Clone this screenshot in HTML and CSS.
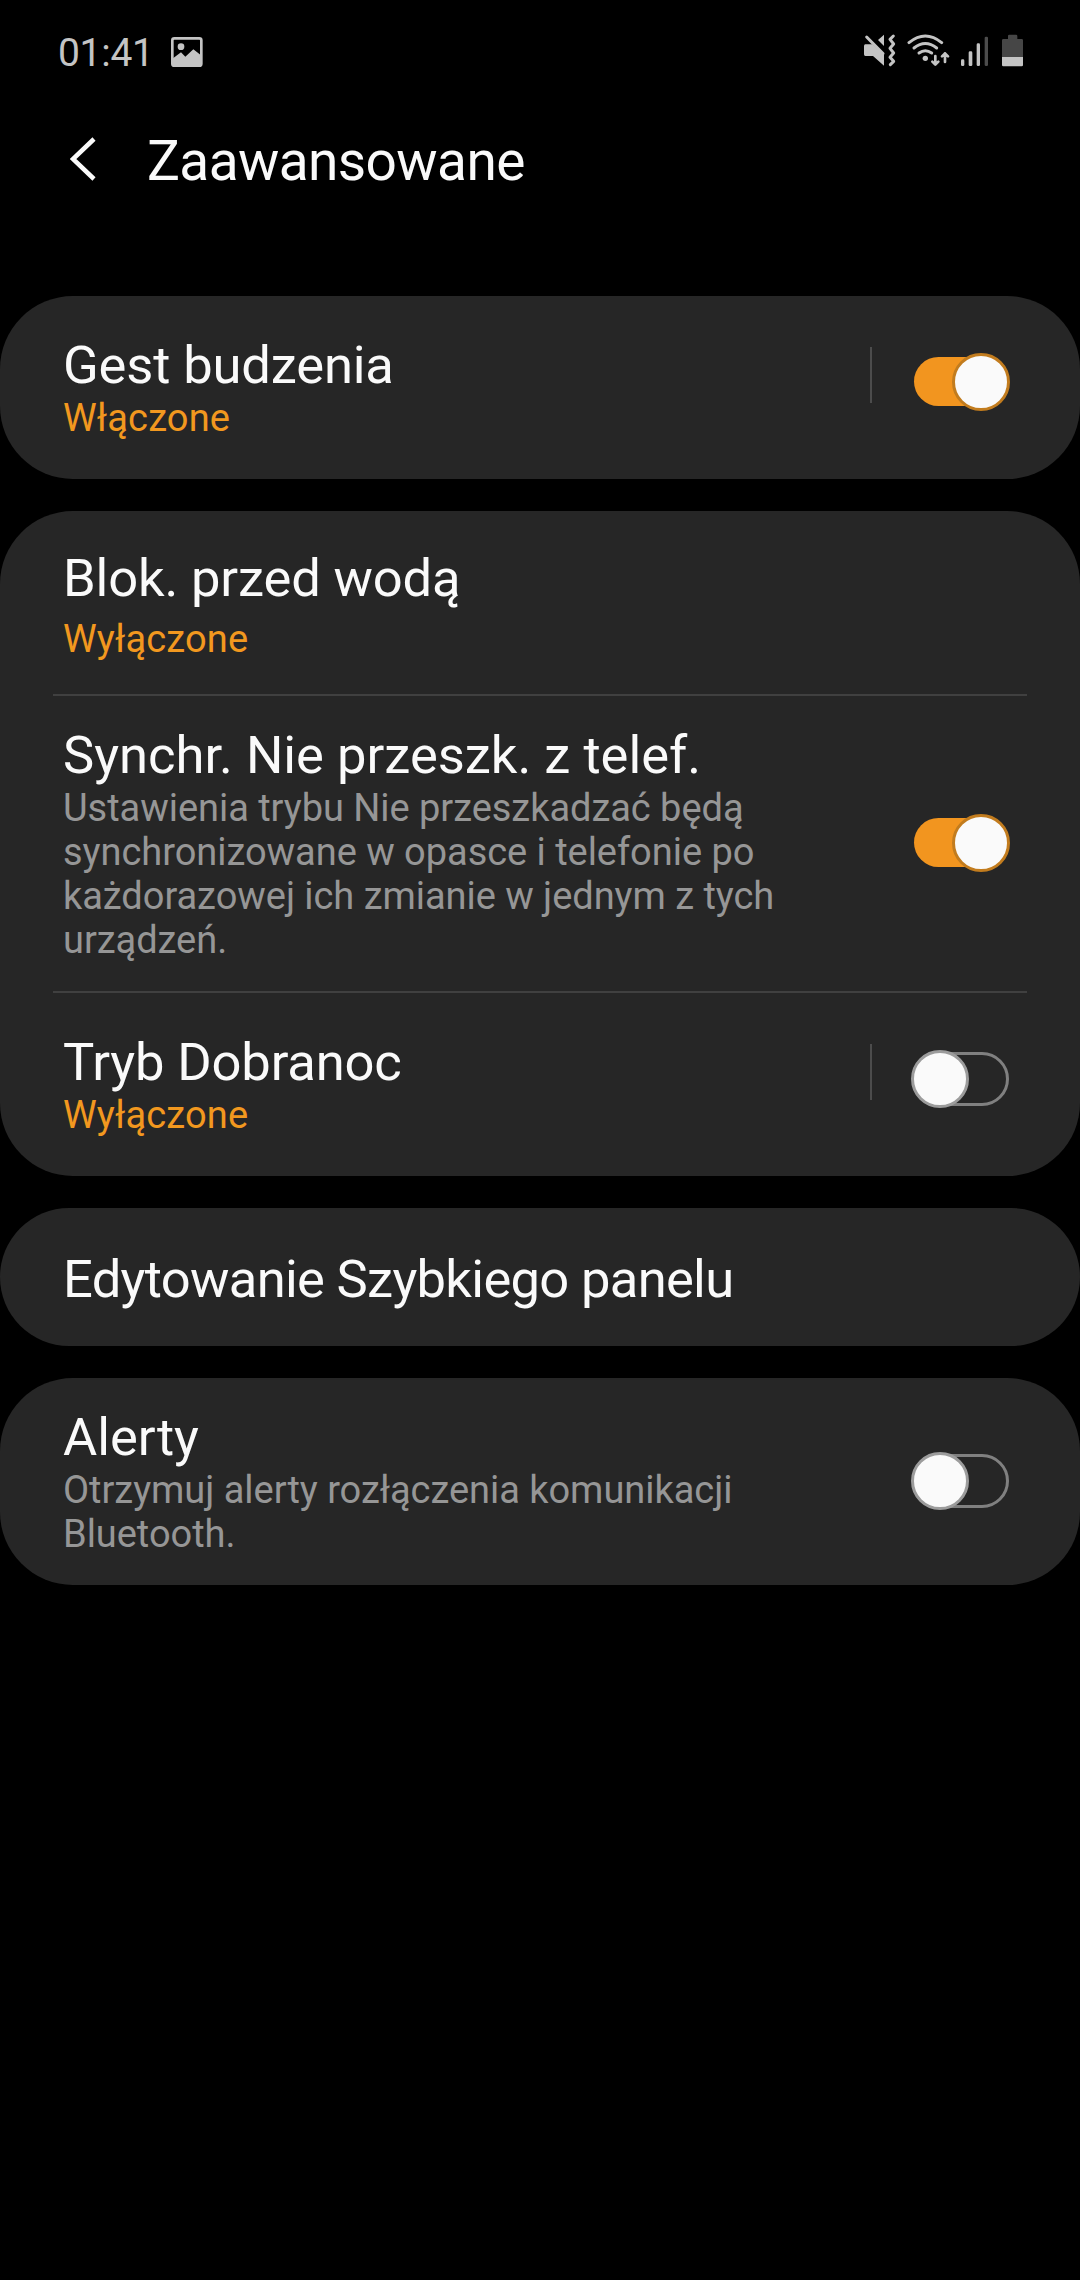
FILE: index.html
```html
<!DOCTYPE html>
<html lang="pl">
<head>
    <meta charset="utf-8">
    <meta name="viewport" content="width=device-width, initial-scale=1">
    <title>Zaawansowane</title>
    <link rel="stylesheet" href="styles.css">
</head>
<body>

<div class="status-bar">
    <span class="clock">01:41</span>
    <svg class="icon-picture" width="32" height="30" viewBox="0 0 96 90">
        <rect x="4" y="4" width="87" height="82" rx="6" fill="none" stroke="#c4c4c4" stroke-width="8"/>
        <circle cx="30" cy="29" r="10" fill="#c4c4c4"/>
        <path d="M6 64 L30 46 L43 59 L67 37 L90 55 V85 H6 Z" fill="#c4c4c4"/>
    </svg>
    <div class="status-icons">
        <svg class="icon-mute" width="32" height="34" viewBox="42 39 96 102">
            <path d="M46 73 H66 L102 104 V137 L69 108 H46 Q42 108 42 103 V78 Q42 73 46 73 Z" fill="#c4c4c4"/>
            <path d="M102 44 V78 L84 60 Z" fill="#c4c4c4"/>
            <path d="M50 51 L99 101" stroke="#c4c4c4" stroke-width="9" stroke-linecap="round"/>
            <path d="M130 48 L120 58 L131 72 L120 85 L131 99 L120 112 L131 124 L121 134" fill="none" stroke="#c4c4c4" stroke-width="9" stroke-linecap="round" stroke-linejoin="round"/>
        </svg>
        <svg class="icon-wifi" width="45" height="34" viewBox="168 39 135 102">
            <g fill="none" stroke="#c4c4c4" stroke-width="9" stroke-linecap="round">
                <path d="M177 68 Q226 28 275 68"/>
                <path d="M192 84 Q226 57 260 84"/>
                <path d="M207 99 Q226 85 245 99"/>
            </g>
            <circle cx="226" cy="115" r="8" fill="#c4c4c4"/>
            <g fill="none" stroke="#c4c4c4" stroke-width="8" stroke-linecap="round" stroke-linejoin="round">
                <path d="M256 108 V133 M247 125 L256 134 L265 125"/>
                <path d="M285 126 V100 M276 109 L285 100 L294 109"/>
            </g>
        </svg>
        <svg class="icon-signal" width="30" height="34" viewBox="327 39 90 102">
            <rect x="333" y="118" width="10" height="20" rx="4" fill="#c4c4c4"/>
            <rect x="356" y="94" width="11" height="44" rx="4" fill="#c4c4c4"/>
            <rect x="380" y="70" width="10" height="68" rx="4" fill="#c4c4c4"/>
            <rect x="404" y="50" width="10" height="88" rx="4" fill="#4c4c4c"/>
        </svg>
        <svg class="icon-battery" width="23" height="34" viewBox="453 39 69 102">
            <path d="M474 57 V48 Q474 44 478 44 H498 Q502 44 502 48 V57 H515 Q519 57 519 61 V111 H456 V61 Q456 57 460 57 Z" fill="#464646"/>
            <path d="M456 111 H519 V135 Q519 139 515 139 H460 Q456 139 456 135 Z" fill="#c4c4c4"/>
        </svg>
    </div>
</div>

<div class="header">
    <svg class="back" width="26" height="44" viewBox="0 0 26 44">
        <path d="M24 2 L3 22 L24 42" fill="none" stroke="#fafafa" stroke-width="4.5"/>
    </svg>
    <h1>Zaawansowane</h1>
</div>

<div class="settings">
    <div class="card">
        <div class="row tall">
            <div class="text">
                <div class="title">Gest budzenia</div>
                <div class="state">Włączone</div>
            </div>
            <div class="separator"></div>
            <div class="switch on"><div class="track"></div><div class="thumb"></div></div>
        </div>
    </div>

    <div class="card">
        <div class="row spaced">
            <div class="text">
                <div class="title">Blok. przed wodą</div>
                <div class="state">Wyłączone</div>
            </div>
        </div>
        <div class="divider"></div>
        <div class="row">
            <div class="text">
                <div class="title wide">Synchr. Nie przeszk. z telef.</div>
                <div class="desc">Ustawienia trybu Nie przeszkadzać będą synchronizowane w opasce i telefonie po każdorazowej ich zmianie w jednym z tych urządzeń.</div>
            </div>
            <div class="switch on"><div class="track"></div><div class="thumb"></div></div>
        </div>
        <div class="divider"></div>
        <div class="row tall">
            <div class="text">
                <div class="title">Tryb Dobranoc</div>
                <div class="state">Wyłączone</div>
            </div>
            <div class="separator"></div>
            <div class="switch"><div class="track"></div><div class="thumb"></div></div>
        </div>
    </div>

    <div class="card">
        <div class="row single">
            <div class="title">Edytowanie Szybkiego panelu</div>
        </div>
    </div>

    <div class="card">
        <div class="row">
            <div class="text">
                <div class="title wide">Alerty</div>
                <div class="desc">Otrzymuj alerty rozłączenia komunikacji Bluetooth.</div>
            </div>
            <div class="switch"><div class="track"></div><div class="thumb"></div></div>
        </div>
    </div>
</div>

</body>
</html>
```
FILE: styles.css
```css
* {box-sizing: border-box;}

body {
    margin: 0;
    min-height: 2280px;
    background-color: #000;
    color: #fafafa;
    font-family: Roboto, sans-serif;
}

svg {
    display: block;
}

/* Status bar */
.status-bar {
    display: flex;
    align-items: flex-start;
    height: 104px;
    padding: 33px 56px 0 58px;
}

.clock {
    width: 113px;
    margin-top: -3px;
    font-size: 39px;
    line-height: 46px;
    letter-spacing: -0.3px;
    color: #c4c4c4;
}

.icon-picture {
    margin-top: 4px;
}

.status-icons {
    display: flex;
    margin-left: auto;
}

.icon-wifi {
    margin-left: 10px;
}

.icon-signal {
    margin-left: 8px;
}

.icon-battery {
    margin-left: 12px;
}

/* Page header */
.header {
    display: flex;
    align-items: center;
    height: 192px;
    padding: 0 0 82px 70px;
}

.header h1 {
    margin: 4px 0 0 51px;
    font-size: 55px;
    line-height: 64px;
    font-weight: 400;
    letter-spacing: -0.6px;
}

/* Setting groups */
.settings {
    display: flex;
    flex-direction: column;
    gap: 32px;
}

.card {
    background-color: #262626;
    border-radius: 73px;
}

.row {
    display: flex;
    align-items: center;
    padding: 29px 70px 29px 63px;
}

.row.tall {
    padding-top: 39px;
    padding-bottom: 39px;
}

.row.spaced {
    padding-top: 37px;
    padding-bottom: 33px;
}

.row.spaced .state {
    margin-top: 8px;
}

.row.single {
    padding-top: 41px;
    padding-bottom: 36px;
}

.divider {
    height: 2px;
    margin: 0 53px;
    background-color: #404040;
}

.text {
    width: 740px;
}

.title {
    font-size: 52.5px;
    line-height: 61px;
    letter-spacing: -0.15px;
}

.title.wide {
    letter-spacing: 0;
}

.row.single .title {
    letter-spacing: -0.68px;
}

.state, .desc {
    font-size: 38px;
    line-height: 44px;
}

.state {
    letter-spacing: 0.15px;
    color: #f2981f;
}

.desc {
    letter-spacing: -0.04px;
    color: #969696;
}

.separator {
    width: 2px;
    height: 56px;
    margin: 0 0 25px 67px;
    background-color: #4c4c4c;
}

/* Switches */
.switch {
    position: relative;
    width: 99px;
    height: 58px;
    margin: 0 0 1px auto;
}

.row.tall .switch {
    margin-bottom: 11px;
}

.track {
    width: 95px;
    height: 54px;
    margin: 2px 1px 2px 3px;
    border: 3px solid #808080;
    border-radius: 27px;
}

.thumb {
    position: absolute;
    top: 0;
    left: 0;
    width: 58px;
    height: 58px;
    border: 3px solid #9c9c9c;
    border-radius: 50%;
    background-color: #fafafa;
}

.switch.on .track {
    height: 49px;
    margin: 4px 1px 5px 3px;
    border: none;
    background-color: #f2951f;
}

.switch.on .thumb {
    left: 41px;
    border-color: #c27c1e;
}
```
